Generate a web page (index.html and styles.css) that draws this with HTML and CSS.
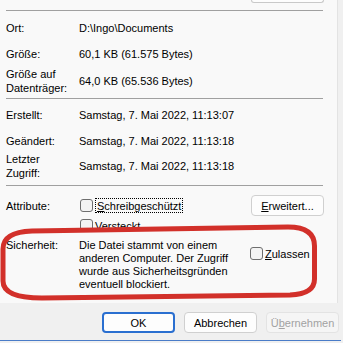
FILE: index.html
```html
<!DOCTYPE html>
<html lang="de">
<head>
    <meta charset="UTF-8">
    <meta name="viewport" content="width=device-width, initial-scale=1.0">
    <title>Eigenschaften</title>
    <link rel="stylesheet" href="styles.css">
</head>
<body>

    <div class="window">
        <div class="panel">
            <div class="change-btn"></div>
            <hr class="sep first">

            <div class="section">
                <div class="row h33"><span class="label">Ort:</span><span class="value">D:\Ingo\Documents</span></div>
                <div class="row h20"><span class="label">Größe:</span><span class="value">60,1 KB (61.575 Bytes)</span></div>
                <div class="row h34"><span class="label two">Größe auf<br>Datenträger:</span><span class="value">64,0 KB (65.536 Bytes)</span></div>
            </div>
            <hr class="sep">

            <div class="section pb4">
                <div class="row h32"><span class="label">Erstellt:</span><span class="value">Samstag, 7. Mai 2022, 11:13:07</span></div>
                <div class="row h20"><span class="label">Geändert:</span><span class="value">Samstag, 7. Mai 2022, 11:13:18</span></div>
                <div class="row h30"><span class="label two">Letzter<br>Zugriff:</span><span class="value">Samstag, 7. Mai 2022, 11:13:18</span></div>
            </div>
            <hr class="sep">

            <div class="section pt9">
                <div class="row attr-row">
                    <span class="label">Attribute:</span>
                    <label class="check"><span class="box"></span><span class="focus"><u>S</u>chreibgeschützt</span></label>
                    <button class="btn"><u>E</u>rweitert...</button>
                </div>
                <div class="row h19">
                    <span class="label"></span>
                    <label class="check"><span class="box"></span><span><u>V</u>ersteckt</span></label>
                </div>
                <div class="row security-row">
                    <span class="label">Sicherheit:</span>
                    <span class="value two">Die Datei stammt von einem<br>anderen Computer. Der Zugriff<br>wurde aus Sicherheitsgründen<br>eventuell blockiert.</span>
                    <label class="check allow"><span class="box"></span><span><u>Z</u>ulassen</span></label>
                </div>
            </div>
        </div>

        <div class="footer">
            <button class="btn default">OK</button>
            <button class="btn">Abbrechen</button>
            <button class="btn disabled">Ü<u>b</u>ernehmen</button>
        </div>

        <!-- red marker drawn over the security row -->
        <svg class="marker" width="343" height="343" viewBox="0 0 343 343">
            <path d="M 32 231 L 288 227 Q 314.5 227 314.5 246 L 314.5 279 Q 314.5 294 290 295 L 42 298 Q 3 298 3 281 L 3 249 Q 3 232 32 231 Z"
                  fill="none" stroke="#d2302a" stroke-width="5" stroke-linejoin="round"/>
        </svg>
    </div>

</body>
</html>
```
FILE: styles.css
```css
* {
    margin: 0;
    padding: 0;
    box-sizing: border-box;
}

body {
    font-family: 'Liberation Sans', Arial, sans-serif;
    font-size: 11px;
    color: #000;
    background: #f0f0f0;
    width: 343px;
    height: 343px;
    overflow: hidden;
}

.window {
    position: relative;
    width: 341px;
    height: 343px;
}

.panel {
    width: 338px;
    height: 303px;
    background: #f9f9f9;
    border-right: 1px solid #e3e3e3;
    padding: 0 14px 0 6px;
}

.change-btn {
    width: 73px;
    height: 3px;
    margin-left: 245px;
    background: #fdfdfd;
    border: 1px solid #c9c9c9;
    border-top: none;
    border-radius: 0 0 4px 4px;
}

.sep {
    border: none;
    border-top: 1px solid #a0a0a0;
}

.sep.first {
    margin-top: 7px;
}

.pb4 { padding-bottom: 4px; }
.pt9 { padding-top: 9px; }

.row {
    display: grid;
    grid-template-columns: 73px 1fr;
    align-items: center;
}

.h19 { height: 19px; }
.h20 { height: 20px; }
.h30 { height: 30px; }
.h32 { height: 32px; }
.h33 { height: 33px; }
.h34 { height: 34px; }

.two {
    line-height: 14px;
}

.attr-row {
    grid-template-columns: 73px 1fr auto;
    height: 21px;
    margin-right: -1px;
}

.security-row {
    grid-template-columns: 73px 171px auto;
    align-items: start;
    margin-top: 4px;
}

.security-row .label,
.security-row .value {
    line-height: 13px;
}

.check {
    display: inline-flex;
    align-items: center;
    gap: 2px;
    margin-left: 1px;
}

.box {
    width: 13px;
    height: 13px;
    border: 1px solid #6e6e6e;
    border-radius: 3px;
    background: #f3f3f3;
}

.focus {
    border: 1px dotted #000;
    padding: 1px 1px 0;
}

.allow {
    margin-left: 0;
    margin-top: 8px;
    gap: 2px;
}

.btn {
    font-family: inherit;
    font-size: 11px;
    color: #000;
    width: 73px;
    height: 21px;
    padding: 0;
    background: #fdfdfd;
    border: 1px solid #d0d0d0;
    border-radius: 4px;
}

.footer {
    height: 38px;
    display: flex;
    justify-content: flex-end;
    gap: 9px;
    padding: 9px 2px 0 0;
    border-bottom: 1px solid #4a7cc8;
}

.btn.default {
    border: 2px solid #2a6fd0;
}

.btn.disabled {
    color: #a2a2a2;
    background: #f5f5f5;
    border-color: #e3e3e3;
}

.marker {
    position: absolute;
    left: 0;
    top: 0;
    pointer-events: none;
}
```
